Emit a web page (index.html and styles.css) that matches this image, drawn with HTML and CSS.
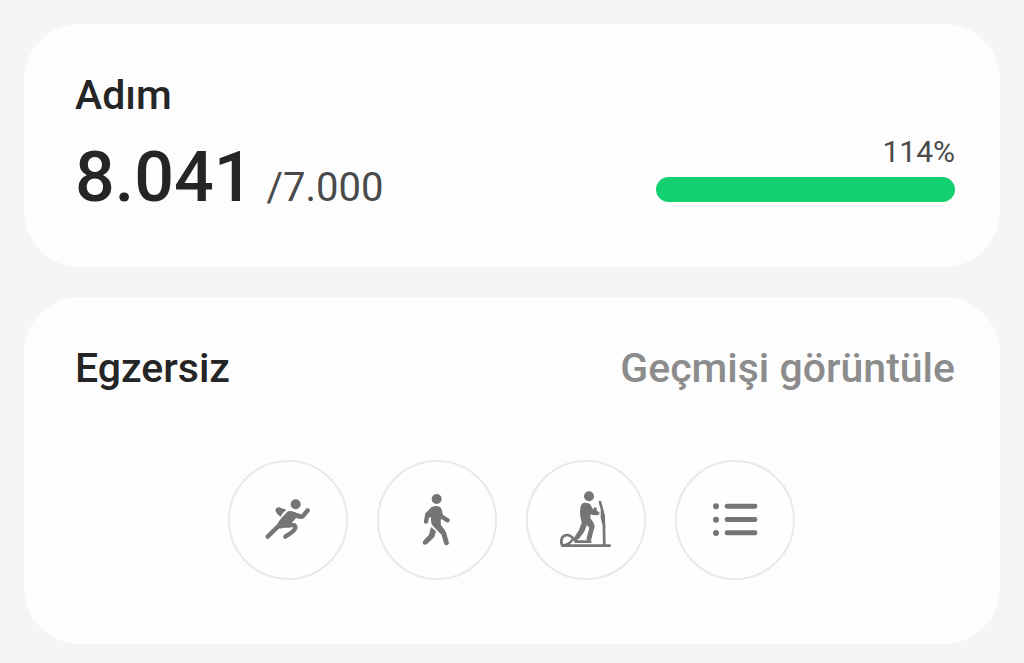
FILE: index.html
```html
<!DOCTYPE html>
<html lang="tr">
<head>
  <meta charset="UTF-8" />
  <meta name="viewport" content="width=device-width, initial-scale=1" />
  <title>Adım ve Egzersiz</title>
  <link rel="stylesheet" href="styles.css">
</head>
<body>

<main class="dashboard">
  <section class="card">
    <h2 class="card-title">Adım</h2>
    <div class="steps-row">
      <p class="steps"><strong class="steps-count">8.041</strong> <span class="steps-goal">/7.000</span></p>
      <div class="steps-progress">
        <label class="percent" for="step-progress">114%</label>
        <progress class="bar" id="step-progress" value="100" max="100"></progress>
      </div>
    </div>
  </section>

  <section class="card">
    <div class="card-header">
      <h2 class="card-title">Egzersiz</h2>
      <a class="history-link" href="#">Geçmişi görüntüle</a>
    </div>
    <div class="exercises">
      <button class="exercise" type="button" aria-label="Koşu">
        <svg class="icon" viewBox="-6 -1 210 210" aria-hidden="true">
          <circle cx="122" cy="57" r="15" />
          <path d="M61 76 Q62 66 72 66 L94 73 Q84 81 76 94 Q66 87 61 76 Z" />
          <path d="M97 79 Q103 75 111 78 L140 88 L137 101 L123 98 L110 114 L124 114 L104 127 L88 127 L74 130 L68 113 L80 97 Z" />
          <path class="limb" d="M38 154 L84 109" />
          <path class="limb" d="M108 85 L138 94 Q142 95 145 91 L158 75" />
          <path class="limb" d="M98 118 L116 120 Q125 122 119 132 Q112 142 91 154" />
        </svg>
      </button>
      <button class="exercise" type="button" aria-label="Yürüyüş">
        <svg class="icon" viewBox="0 -1 210 210" aria-hidden="true">
          <circle cx="104" cy="41" r="15" />
          <path d="M88 66 Q101 59 114 65 Q118 68 120 76 L123 92 L116 104 L117 120 L130 137 L117 147 L93 122 Q87 117 87 106 L87 95 L75 100 L70 86 L75 79 Z" />
          <path class="limb" d="M76 87 L72 109" />
          <path class="limb" d="M114 91 L137 105" />
          <path class="limb limb-thick" d="M108 122 L123 141 Q126 145 127 151 L133 172" />
          <path d="M87 125 L102 138 L97 154 Q95 158 90 162 L75 176 Q68 181 63 176 Q60 170 66 164 L81 148 Z" />
        </svg>
      </button>
      <button class="exercise" type="button" aria-label="Kar ayakkabısı yürüyüşü">
        <svg class="icon" viewBox="0 -1 210 210" aria-hidden="true">
          <circle cx="114" cy="33" r="15" />
          <path d="M96 53 Q107 51 117 56 L127 73 L130 65 L138 69 L137 76 L145 80 Q147 88 139 90 L123 89 L119 85 L118 98 L128 113 L131 123 L121 162 Q118 168 111 167 L106 162 L115 127 L107 119 Q105 128 99 140 L84 160 Q78 165 73 160 L71 154 L84 134 L92 112 L89 98 Q85 77 90 60 Z" />
          <path class="line" d="M147 50 L158 91 L160 180 M153 75 L153 97 L160 124" />
          <path class="line" d="M34 181 H176 M34 181 C26 165 34 149 48 149 C61 149 68 162 78 169 H118 M38 180 C51 179 59 171 67 160 M74 159 V169" />
        </svg>
      </button>
      <button class="exercise" type="button" aria-label="Tüm egzersizler">
        <svg class="icon" viewBox="0 -1 210 210" aria-hidden="true">
          <circle cx="48" cy="63" r="9" />
          <circle cx="48" cy="103" r="9" />
          <circle cx="48" cy="143" r="9" />
          <rect x="74" y="55" width="98" height="15" rx="7" />
          <rect x="74" y="95" width="98" height="15" rx="7" />
          <rect x="74" y="135" width="98" height="15" rx="7" />
        </svg>
      </button>
    </div>
  </section>
</main>

</body>
</html>
```

FILE: styles.css
```css
* {
  box-sizing: border-box;
}
body {
  margin: 0;
  font-family: Roboto, sans-serif;
  background: #f5f5f5;
  color: #252525;
}
.dashboard {
  display: flex;
  flex-direction: column;
  gap: 30px;
  padding: 24px 24px 19px;
}
.card {
  background: #fdfdfd;
  border-radius: 56px;
  padding: 47px 45px 49px 51px;
}
.card-title,
.history-link {
  margin: 0;
  font-size: 41px;
  line-height: 48px;
  font-weight: 500;
}

/* Steps */
.steps-row {
  display: flex;
  justify-content: space-between;
  align-items: flex-end;
  margin-top: 15px;
}
.steps {
  margin: 0;
  font-size: 40px;
  line-height: 48px;
}
.steps-count {
  font-size: 70px;
  line-height: 82px;
  font-weight: 500;
}
.steps-goal {
  margin-left: 3px;
  color: #4a4a4a;
}
.steps-progress {
  display: flex;
  flex-direction: column;
  align-items: flex-end;
  gap: 8px;
  width: 34%;
  padding-bottom: 16px;
}
.percent {
  font-size: 30px;
  line-height: 35px;
  color: #4a4a4a;
}
.bar {
  appearance: none;
  display: block;
  width: 100%;
  height: 25px;
  border: none;
  border-radius: 13px;
  overflow: hidden;
}
.bar::-webkit-progress-bar {
  background: #e6e6e6;
}
.bar::-webkit-progress-value {
  background: #13d170;
}
.bar::-moz-progress-bar {
  background: #13d170;
}

/* Exercises */
.card-header {
  display: flex;
  justify-content: space-between;
}
.history-link {
  color: #8c8c8c;
  text-decoration: none;
}
.exercises {
  display: flex;
  justify-content: center;
  gap: 29px;
  margin: 68px 0 15px;
  padding-right: 8px;
}
.exercise {
  display: flex;
  align-items: center;
  justify-content: center;
  width: 120px;
  height: 120px;
  padding: 0;
  border: 2px solid #e9e9e9;
  border-radius: 50%;
  background: #fefefe;
  cursor: pointer;
}
.exercise:hover {
  background: #f5f5f5;
}
.icon {
  width: 70px;
  height: 70px;
  fill: #757575;
}
.icon .line,
.icon .limb {
  fill: none;
  stroke: #757575;
  stroke-width: 8;
  stroke-linecap: round;
  stroke-linejoin: round;
}
.icon .limb {
  stroke-width: 13;
}
.icon .limb-thick {
  stroke-width: 15;
}
```
